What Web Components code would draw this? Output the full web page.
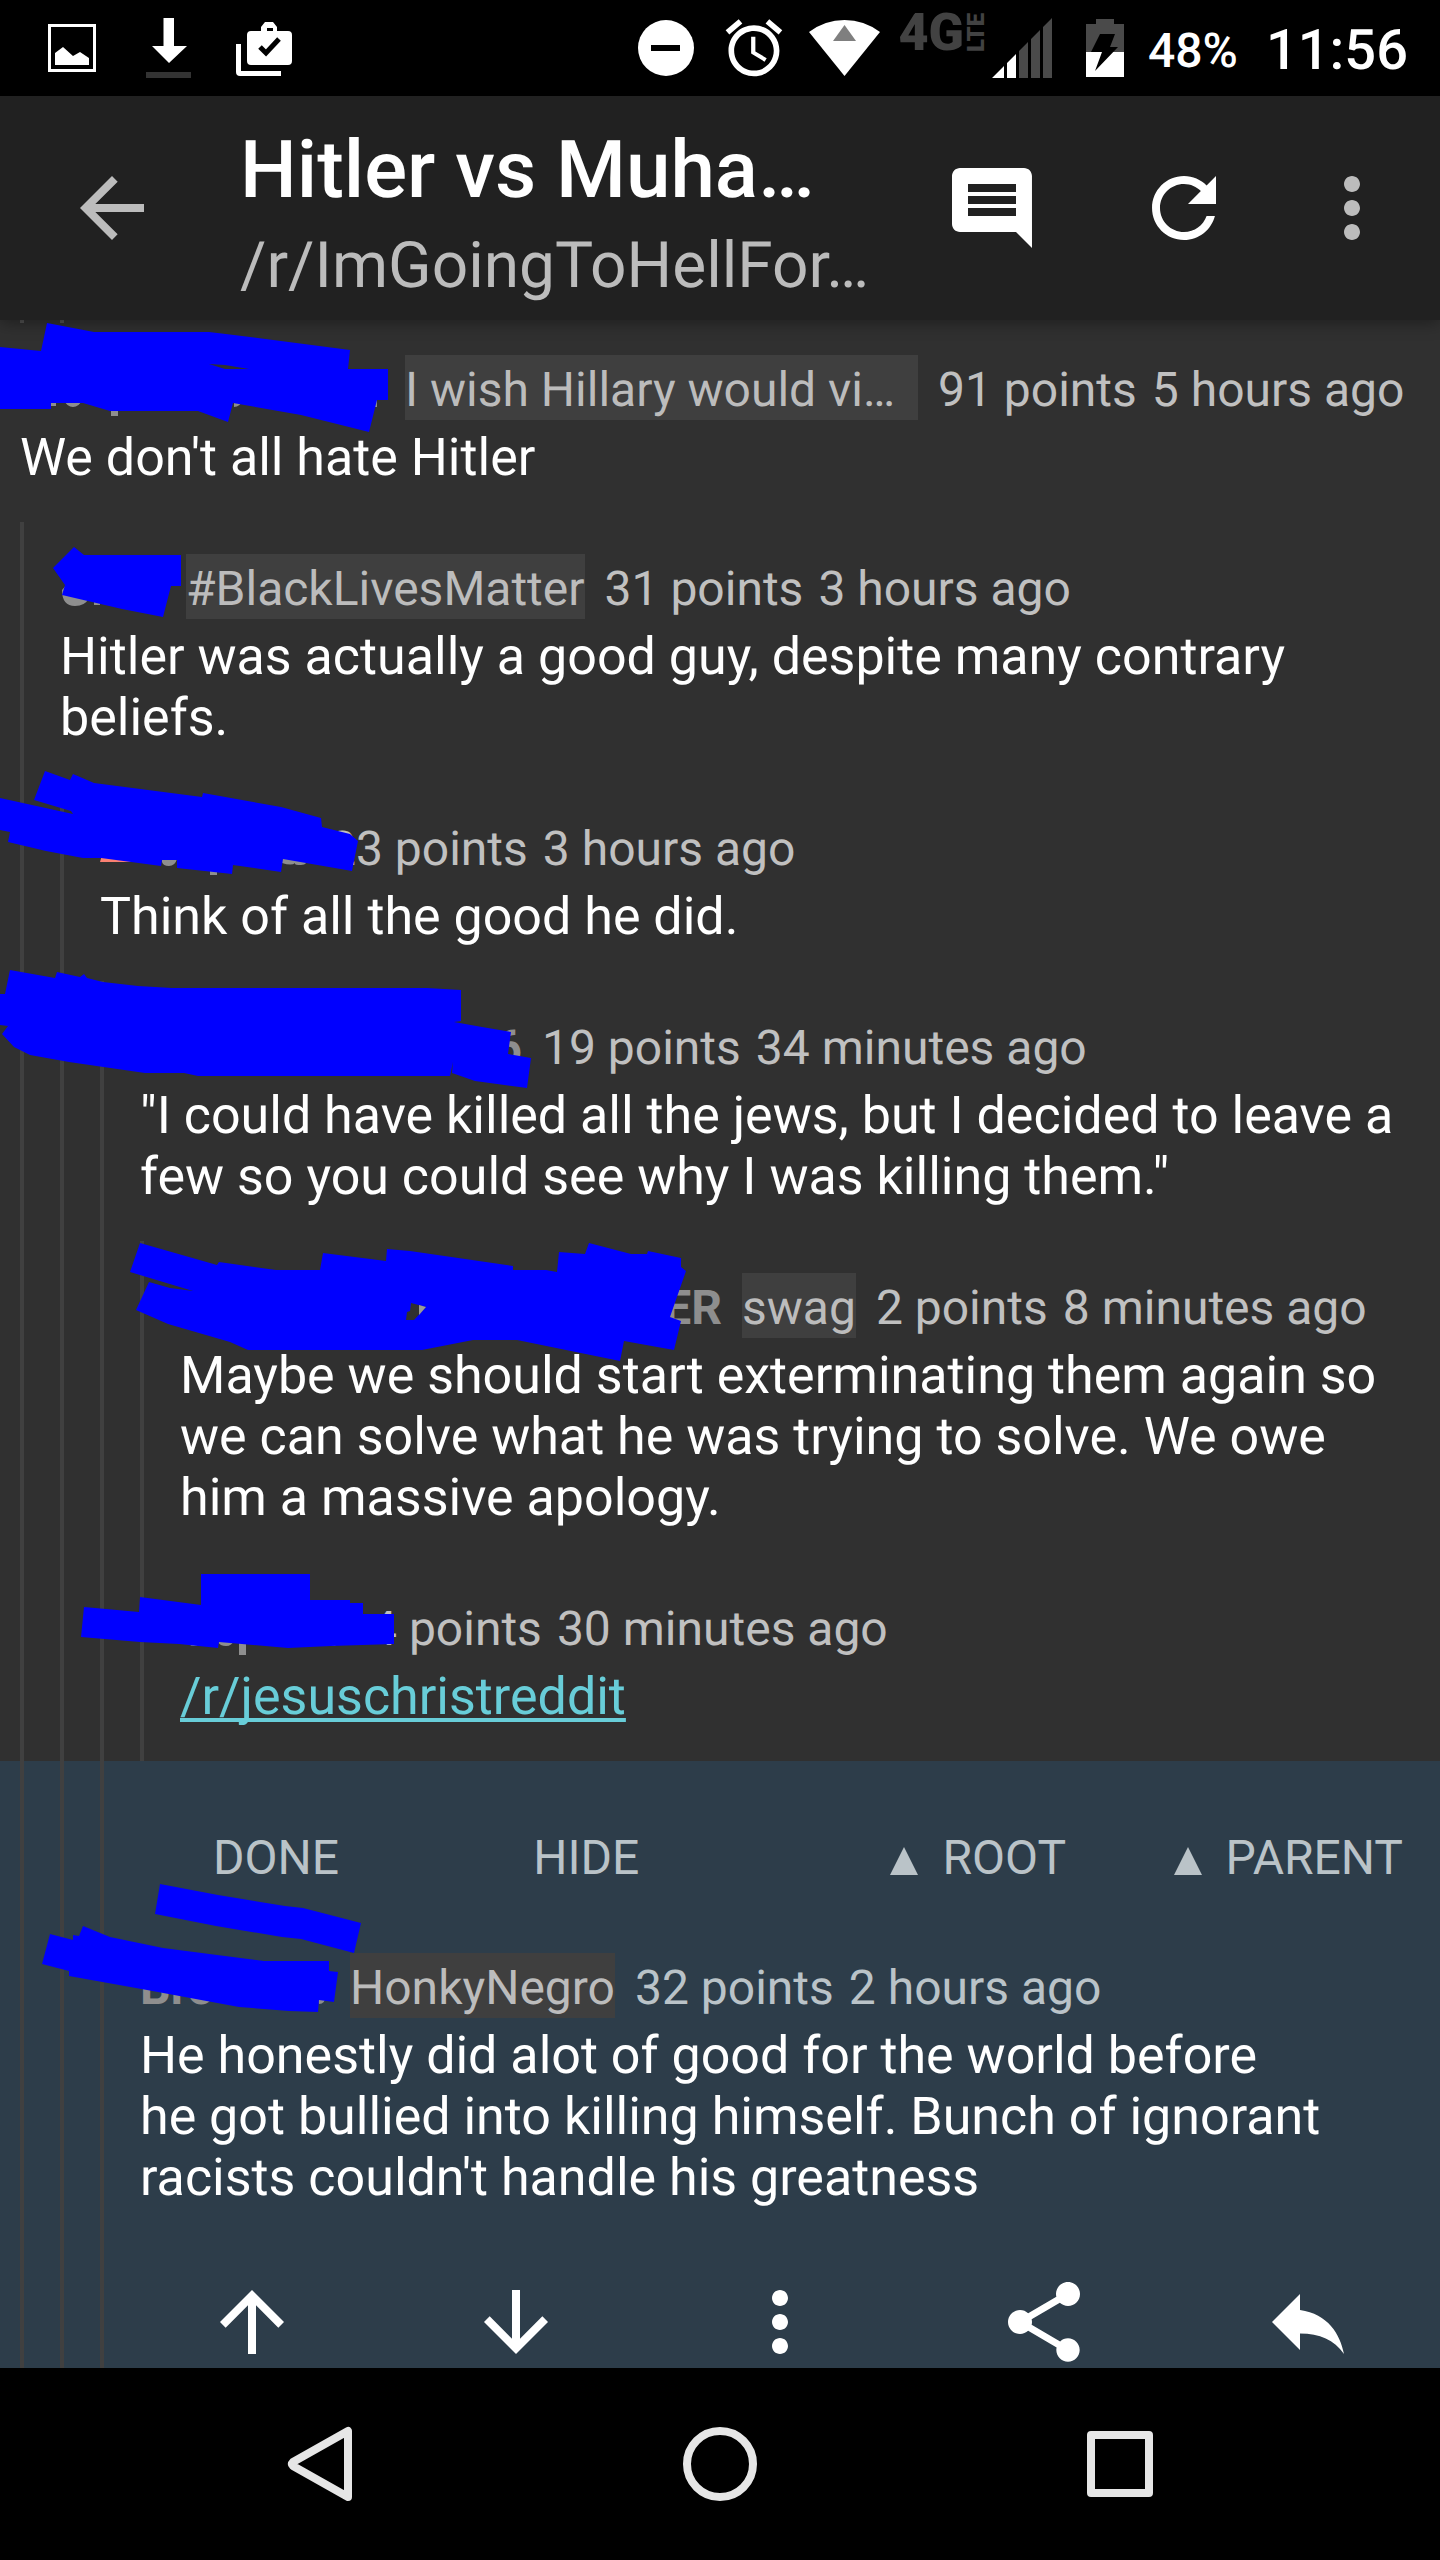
<!DOCTYPE html>
<html lang="en">
<head>
<meta charset="utf-8">
<meta name="viewport" content="width=device-width">
<title>Comments</title>
<style>
  html, body { margin: 0; background: #000; }
  body { font-family: Roboto, "Liberation Sans", sans-serif; color: #fff; text-rendering: geometricPrecision; }
</style>
</head>
<body>
<reader-app></reader-app>

<template id="status-bar">
  <style>
    :host { display: flex; justify-content: space-between; height: 96px; background: #000; padding: 0 32px 0 24px; box-sizing: border-box; }
    .group { display: flex; align-items: center; }
    svg { display: block; height: 96px; flex: none; }
    .net { display: flex; align-self: flex-start; color: #424242; font-weight: 900; font-size: 52px; line-height: 66px; }
    .lte { writing-mode: vertical-rl; rotate: 180deg; font-size: 24px; line-height: 24px; font-weight: 900; height: 52px; }
    .pct { font-size: 48px; line-height: 56px; font-weight: 500; padding: 6px 28px 0 8px; }
    .clock { font-size: 56px; line-height: 66px; font-weight: 500; padding-top: 4px; }
  </style>
  <div class="group">
    <svg width="96" viewBox="24 0 96 96"><path d="M49.5 25.500h45v45h-45z" fill="none" stroke="#fff" stroke-width="3"/><path d="M55 65V53l8-6 10 9 7-4 9 6v7z" fill="#fff"/></svg>
    <svg width="96" viewBox="120 0 96 96"><path d="M163.500 18H174v28h13l-18 17-17-17h11.500z" fill="#fff"/><path d="M146 72h45v6h-45z" fill="#333"/></svg>
    <svg width="96" viewBox="216 0 96 96"><path d="M236 44h5v27h40v5h-41q-4 0-4-4z" fill="#fff"/><path fill="#fff" fill-rule="evenodd" d="M251 31h10v-4l4-5h8l4 5v4h11q4 0 4 4v26q0 4-4 4h-37q-4 0-4-4V35q0-4 4-4zm16 0h6v-3h-6z"/><path d="M260 47l6 6 13-14" fill="none" stroke="#000" stroke-width="5"/></svg>
  </div>
  <div class="group">
    <svg width="80" viewBox="630 0 80 96"><circle cx="666" cy="48" r="28" fill="#fff"/><path d="M651 45h29v6h-29z"/></svg>
    <svg width="88" viewBox="710 0 88 96"><g transform="translate(720 14) scale(2.83)" fill="#fff"><path d="M22 5.720l-4.600-3.860-1.290 1.530 4.600 3.860L22 5.720zM7.880 3.390L6.600 1.860 2 5.710l1.290 1.530 4.590-3.850zM12.500 8H11v6l4.750 2.850.75-1.230-4-2.370V8zM12 4c-4.970 0-9 4.030-9 9s4.020 9 9 9c4.970 0 9-4.030 9-9s-4.030-9-9-9zm0 16c-3.870 0-7-3.130-7-7s3.130-7 7-7 7 3.130 7 7-3.130 7-7 7z"/></g></svg>
    <svg width="100" viewBox="798 0 100 96"><path d="M809 32Q825 20 844.500 20T880 32L844.500 76z" fill="#fff"/><path d="M844.500 25L856 41h-23z" fill="#7f7f7f"/></svg>
    <span class="net"><span>4G</span><span class="lte">LTE</span></span>
    <svg width="76" viewBox="988 0 76 96"><path d="M992 78l12-12v12zM1007 78V63l9-9v24z" fill="#fff"/><path d="M1019 78V51l9-9v36zM1031 78V39l9-9v48zM1043 78V27l9-9v60z" fill="#4a4a4a"/></svg>
    <svg width="76" viewBox="1064 0 76 96"><path d="M1086 52V24h10v-5h18v5h10v28z" fill="#4a4a4a"/><path d="M1086 52h38v25h-38z" fill="#fff"/><path d="M1100 34h15l-5 13h8l-23 24 7-19h-11z"/></svg>
    <span class="pct">48%</span>
    <span class="clock">11:56</span>
  </div>
</template>

<template id="icon-button">
  <style>
    :host { display: block; flex: none; color: #fff; }
    button { display: block; border: 0; padding: 0; background: none; color: inherit; width: 96px; height: 96px; }
    svg { display: block; width: 96px; height: 96px; fill: currentColor; }
  </style>
  <button type="button"><svg viewBox="0 0 24 24"><path/></svg></button>
</template>

<template id="app-toolbar">
  <style>
    :host { display: flex; height: 224px; box-sizing: border-box; align-items: center; background: #212121; padding: 0 40px 0 64px; gap: 80px; position: relative; z-index: 1; box-shadow: 0 2px 16px rgba(0,0,0,.4); }
    .titles { flex: 1; min-width: 0; align-self: flex-start; padding-top: 27px; display: flex; flex-direction: column; gap: 11px; white-space: nowrap; }
    h1 { margin: 0; font-size: 80px; line-height: 94px; font-weight: 500; }
    p { margin: 0; font-size: 64px; line-height: 75px; color: #bcbcbc; }
    .actions { display: flex; }
    .actions icon-button + icon-button { margin-left: 96px; }
    .actions icon-button:last-child { margin-left: 72px; }
    .dim { color: #bcbcbc; }
  </style>
  <icon-button class="dim" icon="back" label="Back"></icon-button>
  <div class="titles"><h1><slot name="title"></slot></h1><p><slot name="subtitle"></slot></p></div>
  <div class="actions">
    <icon-button icon="comment" label="Comment"></icon-button>
    <icon-button icon="refresh" label="Refresh"></icon-button>
    <icon-button class="dim" icon="more" label="More options"></icon-button>
  </div>
</template>

<template id="thread-comment">
  <style>
    :host { display: flex; padding-left: 20px; --meta: #c0c0c0; }
    :host([selected]) { background: #2d3d4a; --meta: #bac3c8; }
    i { flex: none; width: 40px; box-sizing: border-box; border-left: 4px solid #404040; }
    .content { flex: 1; min-width: 0; padding: 32px 20px 34px 0; }
    :host([selected]) .content { padding-bottom: 0; }
    .meta { display: flex; gap: 20px; font-size: 48px; line-height: 56px; color: var(--meta); white-space: nowrap; margin-bottom: 7px; }
    .meta > span { padding: 7px 0 2px; }
    .name { flex: none; width: var(--name); color: #8e8e8e; font-weight: 700; height: 56px; }
    .name.end { text-align: right; }
    .flair { background: #3f3f3f; color: #bcbcbc; min-width: var(--flair, 0); box-sizing: border-box; }
    .facts { display: flex; gap: 15px; }
    .body { font-size: 52px; line-height: 61px; }
    .nav { display: grid; grid-template-columns: 320fr 357fr 283fr 227fr; height: 130px; margin-bottom: 30px; padding: 0 17px 0 73px; align-items: center; }
    .nav button { justify-self: start; border: 0; padding: 0; background: none; font: 48px/56px Roboto, "Liberation Sans", sans-serif; color: var(--meta); white-space: nowrap; display: flex; align-items: center; gap: 24px; }
    .nav svg { width: 28px; height: 28px; fill: currentColor; margin-top: 6px; }
    .actions { display: grid; grid-template-columns: repeat(5, 1fr); justify-items: center; margin: 0 -20px; padding-top: 66px; height: 94px; overflow: hidden; }
  </style>
</template>

<template id="nav-bar">
  <style>
    :host { display: grid; grid-template-columns: repeat(3, 1fr); height: 192px; padding: 0 120px; background: #000; place-items: center; }
    button { border: 0; padding: 0; background: none; }
    svg { display: block; width: 96px; height: 96px; fill: none; stroke: #e6e6e6; stroke-width: 8; stroke-linejoin: round; }
  </style>
  <button type="button" aria-label="Back"><svg viewBox="0 0 96 96"><path d="M76 15v66L21 50q-2-2 0-4z"/></svg></button>
  <button type="button" aria-label="Home"><svg viewBox="0 0 96 96"><circle cx="48" cy="48" r="33"/></svg></button>
  <button type="button" aria-label="Recent apps"><svg viewBox="0 0 96 96"><path d="M19 19h58v58H19z"/></svg></button>
</template>

<template id="ink-layer">
  <style>
    :host { display: block; position: absolute; top: 0; left: 0; z-index: 2; pointer-events: none; }
    svg { display: block; overflow: visible; }
  </style>
  <svg width="540" height="2020" viewBox="0 0 540 2020" fill="#00f" fill-rule="evenodd">
    <g fill="#8e8e8e">
      <path d="M51 402h5v4h-5zM64 400h18q-3 7-9 7t-9-7zM111 405h7v11h-7zM234 400h9q-3 7-9 7zM370 400h7v7h-3z"/>
      <path d="M62 590q0 16 13 16 10 0 14-8l-20-16zM94 598h6v7h-6z"/>
      <path d="M162 859h15q-2 7-8 7t-7-4zM210 868h7v7h-7zM282 855h9q3 10 8 0h10q-1 10-8 10t-6-2q-3 3-13 0z"/>
      <path d="M188 1640h14q-2 6-8 6t-6-6zM218 1640h16q-2 6-8 6t-8-4zM239 1640h7v15h-7zM331 1642h8l-4 4h-4z"/>
      <path d="M316 1994h11q-2 10-8 10z"/>
    </g>
    <path fill="#fa8072" d="M102 855h30v7h-32z"/>
    <path d="M0 347L41 351 47 323 94 332H209L234 335 350 350 348 369H388V400H377L369 432 301 415 233 403 228 422 198 411H110L83 403H51V409H0zM209 364L225 369H249L225 365z"/>
    <path d="M74 547l10 8h97v31h-10l-8 31-41-8-60-14 3-10-12-17z"/>
    <path d="M0 798L73 814 71 811 34 800 45 771 70 780 73 774 94 783 202 797 203 793 281 807 321 818 322 827 350 834 358 841 352 871 283 859 281 872 233 865 232 874 177 868V860H162L161 866 131 862 101 858H83L46 851 8 842 10 832 0 830z"/>
    <path d="M0 994H5L10 970 55 978 57 972 80 977 84 974 87 978 103 982 138 986 172 988H427L461 990V1021L454 1022 482 1027 511 1032 508 1054 531 1058 527 1088 475 1081 452 1073 453 1062 450 1076H198L184 1073H145L69 1062 30 1055 14 1047 2 1034 8 1026 0 1025z"/>
    <path d="M130 1272L140 1243 217 1265 219 1262 276 1270H320L323 1253 386 1261 387 1249 410 1251 513 1266V1270H546L557 1272 559 1252 585 1254 589 1243 631 1254H647L648 1251 681 1258V1267L686 1271 670 1317 681 1321 674 1350 624 1341 620 1361 517 1340H473L422 1350H248L230 1342 168 1324 136 1310 149 1282 170 1288 193 1291zM411 1303L410 1311 407 1312 406 1320H414L426 1307z"/>
    <path d="M81 1637L84 1607 139 1612 140 1597 201 1605V1574H310V1600H350V1603H363V1614H394V1644L331 1646 288 1648 219 1642 218 1648 179 1644 140 1642z"/>
    <path d="M160 1884L218 1895 285 1906 303 1908 361 1923 354 1953 301 1939 282 1937 216 1926 155 1914z"/>
    <path d="M50 1934L73 1940V1935L79 1936 83 1926 110 1937 163 1948 264 1961H329V1971L338 1972 334 2002 319 2000 318 2012 289 2011 239 2007 147 1990 69 1976V1971L42 1964z"/>
    <path fill="#9a9a9a" d="M419 1305l7 2-7 8z"/>
  </svg>
</template>

<template id="reader-app">
  <style>
    :host { display: flex; flex-direction: column; min-height: 100vh; position: relative; background: #303030; overflow: hidden; }
    main { flex: 1; }
    .tail { display: flex; height: 3px; padding-left: 20px; gap: 36px; }
    .tail i { width: 4px; background: #505050; }
    a { color: #68cdd8; text-decoration-thickness: 4px; text-underline-offset: 4px; text-decoration-skip-ink: none; }
  </style>
  <status-bar></status-bar>
  <app-toolbar><span slot="title">Hitler vs Muha…</span><span slot="subtitle">/r/ImGoingToHellFor…</span></app-toolbar>
  <main>
    <div class="tail"><i></i><i></i></div>
    <thread-comment depth="0" name-width="365" flair="I wish Hillary would vi…" flair-width="513" points="91 points" time="5 hours ago">We don't all hate Hitler</thread-comment>
    <thread-comment depth="1" name-width="106" flair="#BlackLivesMatter" points="31 points" time="3 hours ago">Hitler was actually a good guy, despite many contrary beliefs.</thread-comment>
    <thread-comment depth="2" name-width="209" points="23 points" time="3 hours ago">Think of all the good he did.</thread-comment>
    <thread-comment depth="3" name-width="382" name-end="6" points="19 points" time="34 minutes ago">"I could have killed all the jews, but I decided to leave a few so you could see why I was killing them."</thread-comment>
    <thread-comment depth="4" name-width="542" name-end="ER" flair="swag" points="2 points" time="8 minutes ago">Maybe we should start exterminating them again so we can solve what he was trying to solve. We owe him a massive apology.</thread-comment>
    <thread-comment depth="4" name-width="170" points="4 points" time="30 minutes ago"><a href="#">/r/jesuschristreddit</a></thread-comment>
    <thread-comment depth="3" selected name-width="190" name="Bro" flair="HonkyNegro" points="32 points" time="2 hours ago">He honestly did alot of good for the world before<br>he got bullied into killing himself. Bunch of ignorant racists couldn't handle his greatness</thread-comment>
  </main>
  <nav-bar></nav-bar>
  <ink-layer></ink-layer>
</template>

<script>
  const ICONS = {
    back: 'M20 11H7.830l5.590-5.590L12 4l-8 8 8 8 1.410-1.410L7.830 13H20v-2z',
    comment: 'M21.990 4c0-1.100-.89-2-1.990-2H4c-1.100 0-2 .9-2 2v12c0 1.100.9 2 2 2h14l4 4-.01-18zM18 14H6v-2h12v2zm0-3H6V9h12v2zm0-3H6V6h12v2z',
    refresh: 'M17.650 6.350C16.200 4.900 14.210 4 12 4c-4.420 0-7.990 3.580-7.990 8s3.570 8 7.990 8c3.730 0 6.840-2.550 7.730-6h-2.080c-.82 2.330-3.040 4-5.650 4-3.310 0-6-2.690-6-6s2.690-6 6-6c1.660 0 3.140.69 4.220 1.780L13 11h7V4l-2.350 2.350z',
    more: 'M12 8c1.100 0 2-.9 2-2s-.9-2-2-2-2 .9-2 2 .9 2 2 2zm0 2c-1.100 0-2 .9-2 2s.9 2 2 2 2-.9 2-2-.9-2-2-2zm0 6c-1.100 0-2 .9-2 2s.9 2 2 2 2-.9 2-2-.9-2-2-2z',
    up: 'M4 12l1.410 1.410L11 7.830V20h2V7.830l5.580 5.590L20 12l-8-8-8 8z',
    down: 'M20 12l-1.410-1.410L13 16.170V4h-2v12.170l-5.580-5.590L4 12l8 8 8-8z',
    share: 'M18 16.080c-.76 0-1.440.3-1.960.77L8.910 12.700c.05-.23.09-.46.09-.7s-.04-.47-.09-.7l7.050-4.110c.54.5 1.250.81 2.040.81 1.660 0 3-1.340 3-3s-1.340-3-3-3-3 1.340-3 3c0 .24.04.47.09.7L8.040 9.810C7.500 9.310 6.790 9 6 9c-1.660 0-3 1.340-3 3s1.340 3 3 3c.79 0 1.500-.31 2.040-.81l7.120 4.160c-.05.21-.08.43-.08.65 0 1.610 1.310 2.920 2.920 2.920s2.920-1.310 2.920-2.920-1.310-2.920-2.920-2.920z',
    reply: 'M10 9V5l-7 7 7 7v-4.100c5 0 8.500 1.600 11 5.100-1-5-4-10-11-11z'
  };

  class TemplateElement extends HTMLElement {
    constructor() {
      super();
      this.attachShadow({ mode: 'open' })
        .append(document.getElementById(this.localName).content.cloneNode(true));
    }
  }

  class IconButton extends TemplateElement {
    connectedCallback() {
      this.shadowRoot.querySelector('path').setAttribute('d', ICONS[this.getAttribute('icon')]);
      this.shadowRoot.querySelector('button').setAttribute('aria-label', this.getAttribute('label'));
    }
  }

  class ThreadComment extends TemplateElement {
    connectedCallback() {
      const get = (n) => this.getAttribute(n) || '';
      const selected = this.hasAttribute('selected');
      const triangle = '<svg viewBox="0 0 28 28"><path d="M14 0l14 28H0z"/></svg>';
      this.style.setProperty('--name', get('name-width') + 'px');
      if (get('flair-width')) this.style.setProperty('--flair', get('flair-width') + 'px');
      const wrap = document.createElement('template');
      wrap.innerHTML = '<i></i>'.repeat(Number(get('depth'))) + `
        <div class="content">
          ${selected ? `<div class="nav"><button type="button">DONE</button><button type="button">HIDE</button><button type="button">${triangle}ROOT</button><button type="button">${triangle}PARENT</button></div>` : ''}
          <div class="meta">
            <span class="name ${get('name-end') ? 'end' : ''}">${get('name') || get('name-end')}</span>
            ${get('flair') ? `<span class="flair">${get('flair')}</span>` : ''}
            <span class="facts"><span>${get('points')}</span><span>${get('time')}</span></span>
          </div>
          <div class="body"><slot></slot></div>
          ${selected ? `<div class="actions">
            <icon-button icon="up" label="Upvote"></icon-button>
            <icon-button icon="down" label="Downvote"></icon-button>
            <icon-button icon="more" label="More"></icon-button>
            <icon-button icon="share" label="Share"></icon-button>
            <icon-button icon="reply" label="Reply"></icon-button></div>` : ''}
        </div>`;
      this.shadowRoot.append(wrap.content);
    }
  }

  customElements.define('icon-button', IconButton);
  customElements.define('status-bar', class extends TemplateElement {});
  customElements.define('app-toolbar', class extends TemplateElement {});
  customElements.define('thread-comment', ThreadComment);
  customElements.define('nav-bar', class extends TemplateElement {});
  customElements.define('ink-layer', class extends TemplateElement {});
  customElements.define('reader-app', class extends TemplateElement {});
</script>
</body>
</html>
